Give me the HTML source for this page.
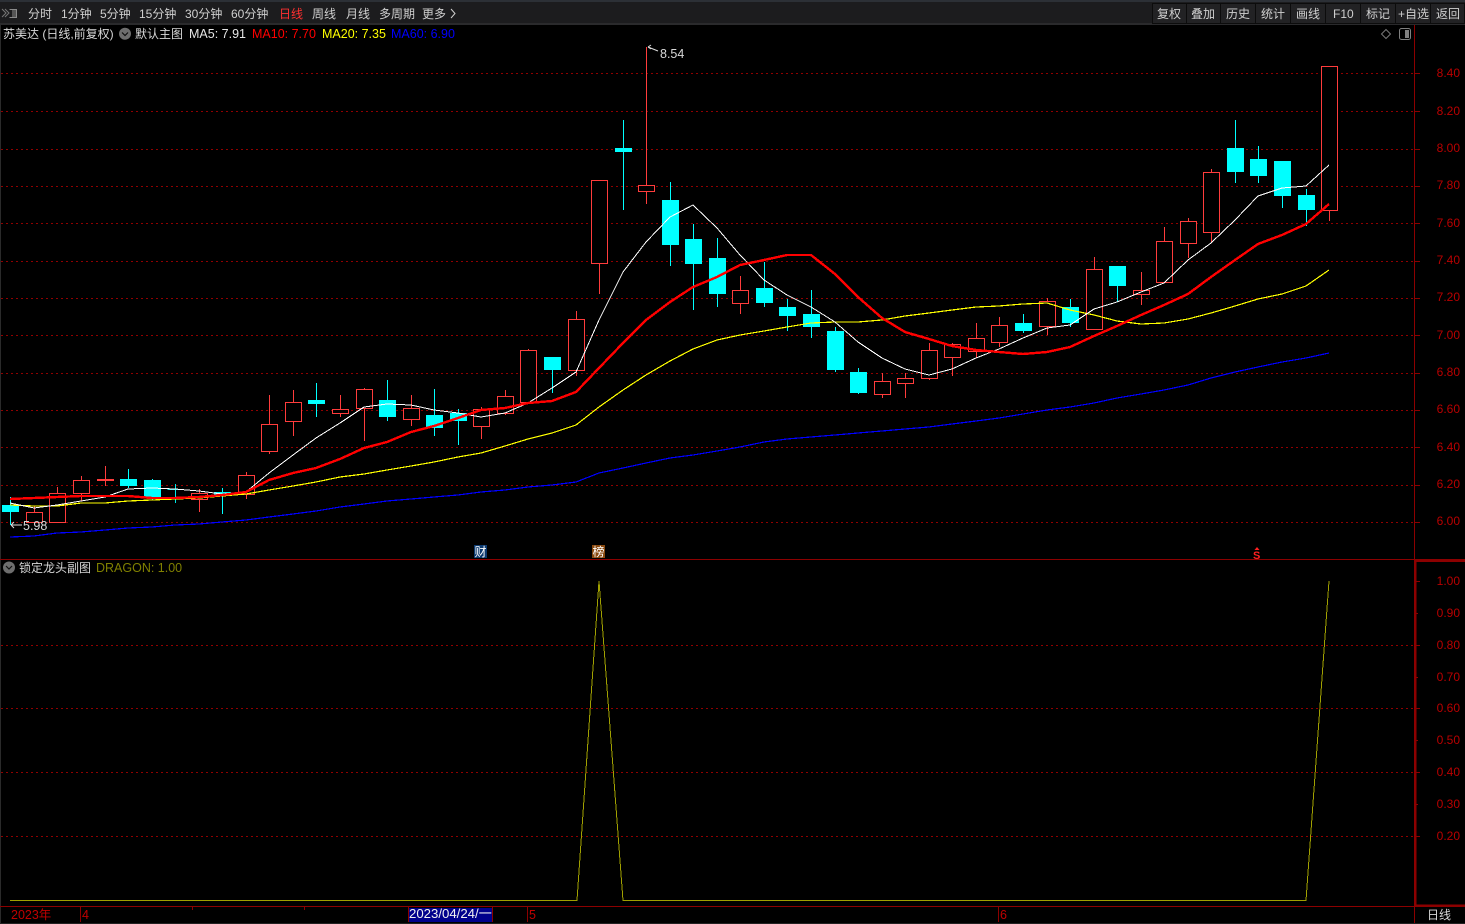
<!DOCTYPE html>
<html lang="zh"><head><meta charset="utf-8"><title>苏美达</title>
<style>
html,body{margin:0;padding:0;background:#000;width:1465px;height:924px;overflow:hidden}
svg{display:block;position:absolute;left:0;top:0}
text{font-family:"Liberation Sans","Noto Sans CJK SC",sans-serif;font-size:12px;white-space:pre}
.n{font-size:12.5px}
.tb{fill:#cfcfcf}
.ax{fill:#b80000;text-anchor:end;font-size:12.5px}
.grid{stroke:#900000;stroke-width:1;stroke-dasharray:2 3;shape-rendering:crispEdges}
.tick{stroke:#8c0000;stroke-width:1;shape-rendering:crispEdges;fill:none}
.red path{fill:#000;stroke:#ff3c3c;stroke-width:1;shape-rendering:crispEdges}
.cy path{fill:#0ff;stroke:#0ff;stroke-width:1;shape-rendering:crispEdges}
.l{fill:none;shape-rendering:crispEdges}
</style></head><body>
<svg width="1465" height="924" viewBox="0 0 1465 924" xmlns="http://www.w3.org/2000/svg">
<rect width="1465" height="924" fill="#000"/>
<!-- toolbar -->
<rect x="0" y="0" width="1465" height="24" fill="#1c1c1e"/>
<rect x="0" y="0" width="1465" height="2" fill="#2c3036"/>
<rect x="0" y="23" width="1465" height="2" fill="#2a2a2c"/>
<g fill="none" stroke="#8a8a8a" stroke-width="1" shape-rendering="crispEdges">
<path d="M9.5 9.5H16.5V17.5H9.5"/><path d="M2 9L6 13L2 17M5 9L9 13L5 17" stroke="#777" shape-rendering="auto"/>
</g>
<rect x="12" y="10" width="4" height="7" fill="#555"/>
<g class="tb">
<text x="28" y="18">分时</text><text x="61" y="18">1分钟</text><text x="100" y="18">5分钟</text><text x="139" y="18">15分钟</text><text x="185" y="18">30分钟</text><text x="231" y="18">60分钟</text>
<text x="279" y="18" style="fill:#ff3030">日线</text>
<text x="312" y="18">周线</text><text x="346" y="18">月线</text><text x="379" y="18">多周期</text><text x="422" y="18">更多</text>
</g>
<path d="M451 9L455 13.5L451 18" fill="none" stroke="#cfcfcf"/>
<!-- right buttons -->
<g fill="#222224" stroke="#0c0c0c" shape-rendering="crispEdges">
<rect x="1152.5" y="3.5" width="34" height="20"/><rect x="1186.5" y="3.5" width="34" height="20"/><rect x="1220.5" y="3.5" width="35" height="20"/><rect x="1255.5" y="3.5" width="35" height="20"/><rect x="1290.5" y="3.5" width="35" height="20"/><rect x="1325.5" y="3.5" width="35" height="20"/><rect x="1360.5" y="3.5" width="35" height="20"/><rect x="1395.5" y="3.5" width="35" height="20"/><rect x="1430.5" y="3.5" width="34" height="20"/>
</g>
<g class="tb">
<text x="1157" y="18">复权</text><text x="1191" y="18">叠加</text><text x="1226" y="18">历史</text><text x="1261" y="18">统计</text><text x="1296" y="18">画线</text><text x="1333" y="18">F10</text><text x="1366" y="18">标记</text><text x="1398" y="18">+自选</text><text x="1436" y="18">返回</text>
</g>
<rect x="0" y="25" width="1" height="899" fill="#2a2a2a"/>
<!-- legend -->
<text x="3" y="38" fill="#d8d8d8">苏美达 (日线,前复权)</text>
<circle cx="125" cy="33.7" r="6" fill="#6e6e6e"/><path d="M122 32.5L125 35.5L128 32.5" fill="none" stroke="#111" stroke-width="1.2"/>
<text x="135" y="38" fill="#d8d8d8">默认主图</text>
<text class="n" x="189" y="38" fill="#e6e6e6">MA5: 7.91</text>
<text class="n" x="252" y="38" fill="#ff0000">MA10: 7.70</text>
<text class="n" x="322" y="38" fill="#ffff00">MA20: 7.35</text>
<text class="n" x="391" y="38" fill="#0000ff">MA60: 6.90</text>
<path d="M1386 29.5L1390.5 34L1386 38.5L1381.5 34Z" fill="none" stroke="#777"/>
<rect x="1399.5" y="28.5" width="11" height="11" rx="2" fill="none" stroke="#808080"/><rect x="1405" y="30" width="4" height="8" fill="#808080"/>
<!-- grid main -->
<g class="grid">
<path d="M1 73.5H1414M1 111.5H1414M1 149.5H1414M1 186.5H1414M1 223.5H1414M1 261.5H1414M1 298.5H1414M1 335.5H1414M1 373.5H1414M1 410.5H1414M1 447.5H1414M1 485.5H1414M1 522.5H1414"/>
</g>
<!-- red candles -->
<g class="red">
<path d="M34.5 506V512M26.5 512.5H42.5V522.5H26.5Z"/>
<path d="M57.5 487V493M49.5 493.5H65.5V522.5H49.5Z"/>
<path d="M81.5 476V480M81.5 494V501M73.5 480.5H89.5V493.5H73.5Z"/>
<path d="M105.5 466V479M105.5 481V486M97.5 479.5H113.5V480.5H97.5Z"/>
<path d="M199.5 489V493M199.5 500V512M191.5 493.5H207.5V499.5H191.5Z"/>
<path d="M246.5 472V475M246.5 495V499M238.5 475.5H254.5V494.5H238.5Z"/>
<path d="M269.5 395V424M269.5 452V454M261.5 424.5H277.5V451.5H261.5Z"/>
<path d="M293.5 390V402M293.5 422V436M285.5 402.5H301.5V421.5H285.5Z"/>
<path d="M340.5 395V409M340.5 414V417M332.5 409.5H348.5V413.5H332.5Z"/>
<path d="M364.5 388V389M364.5 409V441M356.5 389.5H372.5V408.5H356.5Z"/>
<path d="M411.5 395V408M411.5 420V426M403.5 408.5H419.5V419.5H403.5Z"/>
<path d="M481.5 407V409M481.5 427V439M473.5 409.5H489.5V426.5H473.5Z"/>
<path d="M505.5 390V396M505.5 414V415M497.5 396.5H513.5V413.5H497.5Z"/>
<path d="M528.5 349V350M520.5 350.5H536.5V402.5H520.5Z"/>
<path d="M576.5 311V319M576.5 371V376M568.5 319.5H584.5V370.5H568.5Z"/>
<path d="M599.5 264V294M591.5 180.5H607.5V263.5H591.5Z"/>
<path d="M646.5 47V185M646.5 192V204M638.5 185.5H654.5V191.5H638.5Z"/>
<path d="M740.5 276V290M740.5 304V314M732.5 290.5H748.5V303.5H732.5Z"/>
<path d="M882.5 373V381M882.5 395V398M874.5 381.5H890.5V394.5H874.5Z"/>
<path d="M905.5 373V378M905.5 384V398M897.5 378.5H913.5V383.5H897.5Z"/>
<path d="M929.5 343V350M929.5 379V380M921.5 350.5H937.5V378.5H921.5Z"/>
<path d="M952.5 343V344M952.5 358V376M944.5 344.5H960.5V357.5H944.5Z"/>
<path d="M976.5 323V338M976.5 352V358M968.5 338.5H984.5V351.5H968.5Z"/>
<path d="M999.5 317V325M999.5 343V347M991.5 325.5H1007.5V342.5H991.5Z"/>
<path d="M1047.5 298V301M1047.5 327V335M1039.5 301.5H1055.5V326.5H1039.5Z"/>
<path d="M1094.5 257V269M1086.5 269.5H1102.5V329.5H1086.5Z"/>
<path d="M1141.5 272V290M1141.5 295V305M1133.5 290.5H1149.5V294.5H1133.5Z"/>
<path d="M1164.5 227V241M1156.5 241.5H1172.5V282.5H1156.5Z"/>
<path d="M1188.5 218V221M1188.5 244V258M1180.5 221.5H1196.5V243.5H1180.5Z"/>
<path d="M1211.5 169V172M1211.5 233V243M1203.5 172.5H1219.5V232.5H1203.5Z"/>
<path d="M1329.5 211V221M1321.5 66.5H1337.5V210.5H1321.5Z"/>
</g>
<!-- cyan candles -->
<g class="cy">
<path d="M10.5 497V505M10.5 512V525M2.5 505.5H18.5V511.5H2.5Z"/>
<path d="M128.5 469V479M128.5 486V488M120.5 479.5H136.5V485.5H120.5Z"/>
<path d="M152.5 479V480M152.5 497V500M144.5 480.5H160.5V496.5H144.5Z"/>
<path d="M175.5 484V503M167.5 489.5H183.5V489.5H167.5Z" style="stroke-opacity:.9"/>
<path d="M222.5 488V492M222.5 495V514M214.5 492.5H230.5V494.5H214.5Z"/>
<path d="M316.5 383V400M316.5 404V417M308.5 400.5H324.5V403.5H308.5Z"/>
<path d="M387.5 380V400M387.5 417V421M379.5 400.5H395.5V416.5H379.5Z"/>
<path d="M434.5 389V415M434.5 428V436M426.5 415.5H442.5V427.5H426.5Z"/>
<path d="M458.5 409V413M458.5 421V445M450.5 413.5H466.5V420.5H450.5Z"/>
<path d="M552.5 370V393M544.5 357.5H560.5V369.5H544.5Z"/>
<path d="M623.5 120V148M623.5 152V210M615.5 148.5H631.5V151.5H615.5Z"/>
<path d="M670.5 182V200M670.5 245V266M662.5 200.5H678.5V244.5H662.5Z"/>
<path d="M693.5 224V239M693.5 264V310M685.5 239.5H701.5V263.5H685.5Z"/>
<path d="M717.5 238V258M717.5 294V307M709.5 258.5H725.5V293.5H709.5Z"/>
<path d="M764.5 262V288M764.5 303V307M756.5 288.5H772.5V302.5H756.5Z"/>
<path d="M787.5 299V307M787.5 316V331M779.5 307.5H795.5V315.5H779.5Z"/>
<path d="M811.5 290V314M811.5 327V338M803.5 314.5H819.5V326.5H803.5Z"/>
<path d="M835.5 327V331M835.5 370V372M827.5 331.5H843.5V369.5H827.5Z"/>
<path d="M858.5 368V372M858.5 393V394M850.5 372.5H866.5V392.5H850.5Z"/>
<path d="M1023.5 314V323M1023.5 331V333M1015.5 323.5H1031.5V330.5H1015.5Z"/>
<path d="M1070.5 299V307M1070.5 323V327M1062.5 307.5H1078.5V322.5H1062.5Z"/>
<path d="M1117.5 286V302M1109.5 266.5H1125.5V285.5H1109.5Z"/>
<path d="M1235.5 120V148M1235.5 172V183M1227.5 148.5H1243.5V171.5H1227.5Z"/>
<path d="M1258.5 146V159M1258.5 176V183M1250.5 159.5H1266.5V175.5H1250.5Z"/>
<path d="M1282.5 196V208M1274.5 161.5H1290.5V195.5H1274.5Z"/>
<path d="M1306.5 189V195M1306.5 210V226M1298.5 195.5H1314.5V209.5H1298.5Z"/>
</g>
<!-- MA60 -->
<polyline class="l" stroke="#0000ff" stroke-width="1.2" points="10,537 34,536 57,533 81,532 105,530 128,528 152,527 175,525 199,524 222,522 246,520 269,517 293,514 316,511 340,507 364,504 387,501 411,499 434,497 458,495 481,492 505,490 528,487 552,485 576,482 599,473 623,468 646,463 670,458 693,455 717,451 740,447 764,442 787,439 811,437 835,435 858,433 882,431 905,429 929,427 952,424 976,421 999,418 1023,414 1047,410 1070,407 1094,403 1117,398 1141,394 1164,390 1188,385 1211,378 1235,372 1258,367 1282,362 1306,358 1329,353"/>
<!-- MA20 -->
<polyline class="l" stroke="#ffff00" stroke-width="1.2" points="10,505 34,506 57,506 81,503 105,503 128,501 152,500 175,499 199,498 222,496 246,494 269,490 293,486 316,482 340,477 364,474 387,470 411,466 434,462 458,457 481,453 505,446 528,439 552,433 576,425 599,407 623,390 646,375 670,361 693,349 717,340 740,335 764,331 787,327 811,323 835,322 858,322 882,320 905,316 929,313 952,310 976,307 999,306 1023,304 1047,303 1070,310 1094,315 1117,321 1141,324 1164,323 1188,319 1211,313 1235,306 1258,299 1282,294 1306,286 1329,270"/>
<!-- MA5 -->
<polyline class="l" stroke="#ffffff" stroke-width="1" points="10,503 34,508 57,505 81,501 105,497 128,489 152,488 175,489 199,491 222,494 246,492 269,473 293,455 316,438 340,423 364,407 387,404 411,405 434,410 458,413 481,417 505,413 528,403 552,388 576,372 599,320 623,272 646,242 670,217 693,205 717,228 740,255 764,280 787,295 811,307 835,322 858,342 882,358 905,369 929,375 952,369 976,358 999,349 1023,338 1047,328 1070,325 1094,309 1117,302 1141,292 1164,283 1188,260 1211,243 1235,220 1258,196 1282,188 1306,186 1329,165"/>
<!-- MA10 -->
<polyline class="l" stroke="#ff0000" stroke-width="2.4" stroke-linejoin="round" points="10,499 34,498 57,497 81,496 105,496 128,496 152,498 175,498 199,497 222,495 246,492 269,480 293,473 316,468 340,459 364,448 387,442 411,432 434,426 458,418 481,410 505,408 528,403 552,401 576,392 599,368 623,343 646,320 670,302 693,287 717,277 740,265 764,260 787,255 811,255 835,274 858,297 882,318 905,332 929,339 952,346 976,350 999,352 1023,354 1047,352 1070,347 1094,336 1117,326 1141,315 1164,305 1188,294 1211,277 1235,260 1258,244 1282,235 1306,224 1329,204"/>
<!-- hi/lo labels -->
<path d="M648 47L658 51M648 47L651 45M648 47L651 49" stroke="#ddd" fill="none"/>
<text class="n" x="660" y="58" fill="#d8d8d8">8.54</text>
<path d="M11 525H22M11 525L14 522M11 525L14 528" stroke="#ddd" fill="none"/>
<text class="n" x="23" y="530" fill="#d8d8d8">5.98</text>
<!-- markers -->
<rect x="474" y="545" width="13" height="13" fill="#0c3a70"/><text x="474.5" y="556" fill="#fff">财</text>
<rect x="592" y="545" width="13" height="13" fill="#8a4a10"/><text x="592.5" y="556" fill="#fff">榜</text>
<path d="M1257 547L1259.5 550H1254.5Z" fill="#ff2020"/><text x="1253" y="559" fill="#ff2020" style="font-weight:700;font-size:11px">S</text>
<!-- axis main -->
<g class="tick">
<path d="M1414.5 25V924"/>
<path d="M0 559.5H1465"/>
<path d="M0 906.5H1465"/>
<path d="M1415 73.5H1420M1415 111.5H1420M1415 149.5H1420M1415 186.5H1420M1415 223.5H1420M1415 261.5H1420M1415 298.5H1420M1415 335.5H1420M1415 373.5H1420M1415 410.5H1420M1415 447.5H1420M1415 485.5H1420M1415 522.5H1420"/>
</g>
<g class="ax">
<text x="1460" y="77">8.40</text><text x="1460" y="115">8.20</text><text x="1460" y="152">8.00</text><text x="1460" y="189">7.80</text><text x="1460" y="227">7.60</text><text x="1460" y="264">7.40</text><text x="1460" y="301">7.20</text><text x="1460" y="339">7.00</text><text x="1460" y="376">6.80</text><text x="1460" y="413">6.60</text><text x="1460" y="451">6.40</text><text x="1460" y="488">6.20</text><text x="1460" y="525">6.00</text>
</g>
<!-- sub pane -->
<circle cx="9" cy="567.5" r="6" fill="#6e6e6e"/><path d="M6 566L9 569L12 566" fill="none" stroke="#111" stroke-width="1.2"/>
<text x="19" y="572" fill="#d8d8d8">锁定龙头副图</text>
<text class="n" x="96" y="572" fill="#808000">DRAGON: 1.00</text>
<g class="grid"><path d="M1 645.5H1414M1 708.5H1414M1 772.5H1414M1 836.5H1414"/></g>
<polyline class="l" stroke="#a0a000" stroke-width="1" points="10,900.5 577,900.5 599,581 623,900.5 1306,900.5 1329,581"/>
<path d="M1415 561H1465M1415.5 560V906M1415 905.5H1465" stroke="#8c0000" stroke-width="2" fill="none" shape-rendering="crispEdges"/>
<g class="tick"><path d="M1416 581.5H1420M1416 613.5H1418M1416 645.5H1420M1416 677.5H1418M1416 708.5H1420M1416 740.5H1418M1416 772.5H1420M1416 804.5H1418M1416 836.5H1420"/></g>
<g class="ax">
<text x="1460" y="585">1.00</text><text x="1460" y="617">0.90</text><text x="1460" y="649">0.80</text><text x="1460" y="681">0.70</text><text x="1460" y="712">0.60</text><text x="1460" y="744">0.50</text><text x="1460" y="776">0.40</text><text x="1460" y="808">0.30</text><text x="1460" y="840">0.20</text>
</g>
<!-- bottom axis -->
<rect x="408" y="908" width="85" height="14" fill="#00008c"/>
<g class="tick"><path d="M80.5 907V922M408.5 907V922M492.5 907V922M527.5 907V922M998.5 907V922M192.5 907V910M304.5 907V910M1414.5 907V924"/></g>
<text x="11" y="919" fill="#c00000" style="font-size:12.5px">2023年</text>
<text class="n" x="82" y="919" fill="#c00000">4</text>
<text x="409" y="918" fill="#f0f0f0" style="font-size:13.2px">2023/04/24/一</text>
<text class="n" x="529" y="919" fill="#c00000">5</text>
<text class="n" x="1000" y="919" fill="#c00000">6</text>
<text x="1427" y="919" fill="#d8d8d8">日线</text>
<rect x="0" y="923" width="1465" height="1" fill="#222"/>
</svg>
</body></html>
